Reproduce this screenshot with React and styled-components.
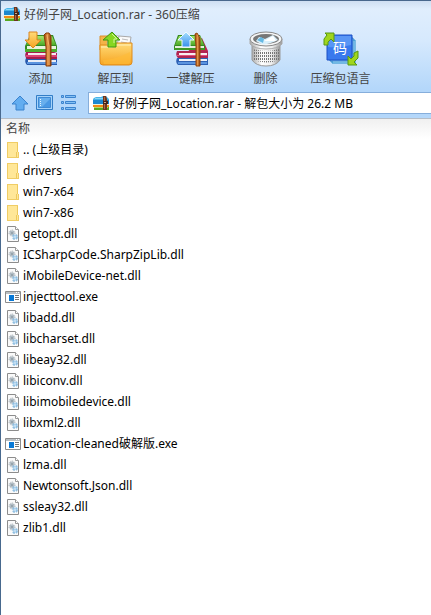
import { useState } from 'react';
import styled, { createGlobalStyle } from 'styled-components';

const GlobalStyle = createGlobalStyle`
  * {
    box-sizing: border-box;
  }

  body {
    margin: 0;
    background: #fff;
    font-family: 'Noto Sans', 'Noto Sans CJK SC', sans-serif;
    font-size: 12px;
  }

  svg {
    display: block;
    flex: none;
  }
`;

const Window = styled.main`
  min-height: 100vh;
  border-left: 1px solid #48698e;
  border-top: 1px solid #49688d;
  background: #fff;
`;

const Head = styled.header`
  padding-bottom: 4px;
  border-bottom: 1px solid #b5bdc7;
  background: linear-gradient(#cfdff2 0, #e0eefd 8px, #d6e9fd 40px, #b4d7fa 88px, #b4d7fa);
`;

const TitleBar = styled.h1`
  display: flex;
  align-items: center;
  gap: 4px;
  height: 26px;
  margin: 0;
  padding-left: 3px;
  color: #444;
  font-size: 12px;
  font-weight: 400;
  white-space: nowrap;
`;

const Toolbar = styled.nav`
  display: flex;
  padding: 4px 0 0 2px;
`;

const ToolButton = styled.button`
  display: flex;
  flex-direction: column;
  align-items: center;
  gap: 2px;
  width: 75px;
  height: 61px;
  padding: 0;
  border: 0;
  background: none;
  color: #444;
  font: inherit;
  line-height: 20px;
  white-space: nowrap;
`;

const AddressRow = styled.div`
  display: flex;
  align-items: center;
  height: 22px;
  padding-left: 10px;
`;

const NavButton = styled.button`
  width: 25px;
  height: 18px;
  padding: 0;
  border: 0;
  background: none;
`;

const AddressBox = styled.label`
  display: flex;
  flex: 1;
  align-items: center;
  gap: 4px;
  height: 22px;
  margin-left: 2px;
  padding-left: 4px;
  border: 1px solid #86aedb;
  border-right: 0;
  background: #fff;
`;

const AddressInput = styled.input`
  flex: 1;
  min-width: 0;
  padding: 0;
  border: 0;
  outline: 0;
  background: none;
  color: #000;
  font: inherit;
`;

const FileTable = styled.table`
  width: 100%;
  border-collapse: collapse;
`;

const HeadCell = styled.th`
  height: 20px;
  padding: 0 5px;
  background: linear-gradient(#f0f0f0, #fff);
  color: #444;
  font-weight: 400;
  line-height: 20px;
  text-align: left;
`;

const FileCell = styled.td`
  height: 21px;
  padding: 0 4px;
  color: #000;
`;

const FileName = styled.div`
  display: flex;
  align-items: center;
  gap: 2px;
  height: 21px;
  line-height: 21px;
  white-space: nowrap;
`;

const ArchiveIcon = () => (
  <svg width="16" height="16" viewBox="0 0 16 16" aria-hidden="true">
    <path d="M1 3l2-1h5l2-1h3l3 3v4H0V4z" fill="#49b4e8" />
    <path d="M2 3h11v1H2z" fill="#8bd6f7" />
    <path d="M0 5h16v4H0z" fill="#1c87cf" />
    <path d="M0 9h16v1H0z" fill="#e9f3dc" />
    <path d="M0 10h16v2H0z" fill="#f18a16" />
    <path d="M1 12h15v3H1z" fill="#58a820" />
    <path d="M1 12h14v1H1z" fill="#b4d968" />
    <path d="M10 1h3l1 3v11h-4z" fill="#6d351d" />
    <path d="M11 2h1v12h-1z" fill="#ad6842" />
    <path d="M10 6h5v3h-5z" fill="#42231a" />
    <path d="M11 7h2v1h-2z" fill="#d7a880" />
  </svg>
);

const Gradients = () => (
  <defs>
    <linearGradient id="gold" x2="0" y2="1">
      <stop stopColor="#ffdb78" />
      <stop offset="1" stopColor="#f7a421" />
    </linearGradient>
    <linearGradient id="green" x2="0" y2="1">
      <stop stopColor="#a4e66c" />
      <stop offset="1" stopColor="#4eaa29" />
    </linearGradient>
    <linearGradient id="strap">
      <stop stopColor="#934008" />
      <stop offset=".5" stopColor="#e49345" />
      <stop offset="1" stopColor="#883c0b" />
    </linearGradient>
    <linearGradient id="sky" x2="0" y2="1">
      <stop stopColor="#a8e0ff" />
      <stop offset="1" stopColor="#388fee" />
    </linearGradient>
  </defs>
);

const BookStack = () => (
  <>
    <path d="M3 27h31v7H4q-3-3-1-7z" fill="#2859ac" />
    <path d="M5 29h28v2H5z" fill="#e9edf7" />
    <path d="M4 31h30v2H4z" fill="#5b94df" />
    <path d="M3 21h28l3 1v6H4q-3-3-1-7z" fill="#a81c4e" />
    <path d="M5 22h28v2H5z" fill="#f6e8ef" />
    <path d="M3 24h31v2H3z" fill="#dc4275" />
    <path d="M7 4h23l4 11v6H2v-6z" fill="#358b22" />
    <path d="M8 5h21l4 9H3z" fill="url(#green)" />
    <path d="M4 15h29v3H4z" fill="#e8f4dc" />
    <path d="M2 18h32v3H2z" fill="#4cad2c" />
  </>
);

const AddIcon = () => (
  <svg width="36" height="36" viewBox="0 0 36 36" aria-hidden="true">
    <Gradients />
    <BookStack />
    <path d="M21 4l2-2h3l2 3v30h-5V16z" fill="url(#strap)" stroke="#8a3c08" />
    <path d="M24 4l2 11v19" fill="none" stroke="#f6b067" />
    <path d="M6 1h8v8h4l-8 8-8-8h4z" fill="url(#gold)" stroke="#dc8520" />
  </svg>
);

const ExtractToIcon = () => (
  <svg width="36" height="36" viewBox="0 0 36 36" aria-hidden="true">
    <path d="M2 5h9l3 4h18v10H2z" fill="#f4b348" stroke="#dd902a" />
    <path d="M12 4l9 1v12H8z" fill="#fff" stroke="#b8b8b8" />
    <path d="M21 5l12 1-2 13H18z" fill="#fafafa" stroke="#a9a9a9" />
    <path d="M24 8l6 1M23 11l6 1" stroke="#bbb" />
    <path d="M2 14h11l3-2h18v19q0 3-3 3H5q-3 0-3-3z" fill="url(#gold)" stroke="#df8b1b" />
    <path d="M3 16h11l3-2h16" fill="none" stroke="#fff0b9" />
    <path d="M5 29q12 0 27-8v10q0 2-3 2H6z" fill="#ffbd38" opacity=".6" />
    <path d="M14 1l8 8h-4v7h-8V9H5z" fill="#87d721" stroke="#3f9512" />
    <path d="M14 3l5 5h-3v4" fill="none" stroke="#d0f39d" />
  </svg>
);

const ExtractIcon = () => (
  <svg width="36" height="36" viewBox="0 0 36 36" aria-hidden="true">
    <path d="M29 7l6 13v7H8z" fill="#bc254e" />
    <path d="M4 27h31v7H5q-3-3-1-7z" fill="#2e61b4" />
    <path d="M6 28h28v2H6z" fill="#eef2f9" />
    <path d="M5 31h29v2H5z" fill="#5b94df" />
    <path d="M4 20h31v7H5q-3-3-1-7z" fill="#b02451" />
    <path d="M6 22h28v2H6z" fill="#f9edf1" />
    <path d="M4 24h30v1H4z" fill="#e0527f" />
    <path d="M5 4h22l5 11v4H1v-4z" fill="#358b22" />
    <path d="M6 5h21l4 9H2z" fill="url(#green)" />
    <path d="M2 15h29v2H2z" fill="#e5efda" />
    <path d="M1 17h31v2H1z" fill="#3f9726" />
    <path d="M22 3l2-1 3 5v28h-4V15z" fill="url(#strap)" stroke="#92420b" />
    <path d="M13 1l8 8h-4v7H9V9H5z" fill="url(#sky)" stroke="#eefaff" />
  </svg>
);

const DeleteIcon = () => (
  <svg width="36" height="36" viewBox="0 0 36 36" aria-hidden="true">
    <defs>
      <linearGradient id="metal">
        <stop stopColor="#aaa" />
        <stop offset=".35" stopColor="#fff" />
        <stop offset=".7" stopColor="#eee" />
        <stop offset="1" stopColor="#999" />
      </linearGradient>
      <pattern id="holes" width="2" height="3" patternUnits="userSpaceOnUse">
        <path d="M0 0h1v2H0z" fill="#777" />
      </pattern>
    </defs>
    <path d="M4 11v18q4 6 14 6t14-6V11z" fill="url(#metal)" stroke="#999" />
    <path d="M5 18q13 4 26 0v11q-13 5-26 0z" fill="url(#holes)" />
    <path d="M2 8v5q5 5 16 5t16-5V8z" fill="url(#metal)" stroke="#aaa" />
    <ellipse cx="18" cy="8" rx="16" ry="7" fill="#f5f5f5" stroke="#888" />
    <ellipse cx="18" cy="8" rx="13" ry="5" fill="#777" />
    <path d="M8 10l3-4 6 2 8-4 5 5q-9 5-17 4z" fill="#d9effa" />
    <path d="M9 9l4-3 3 2-1 4z" fill="#65b9e4" />
    <path d="M16 10l9-5 3 5z" fill="#fff" />
  </svg>
);

const LanguageIcon = () => (
  <svg width="36" height="36" viewBox="0 0 36 36" aria-hidden="true">
    <path d="M9 9h23v23H9z" fill="#bfe9ff" stroke="#228bc9" />
    <path d="M7 7h23v23H7z" fill="#9bd8fb" stroke="#257bc6" />
    <path d="M4 4h25v25H4z" fill="#3979ed" stroke="#1c51c5" />
    <path d="M5 5h23v9q-11 3-23 2z" fill="#5996f5" />
    <text x="17" y="22" fill="#fff" fontSize="14" textAnchor="middle">
      码
    </text>
    <path d="M1 14V8l3-4-2-2h9v9L8 8l-3 3v3z" fill="#a0d51c" stroke="#579812" />
    <path d="M35 20v7l-4 4 3 3h-9v-9l3 3 3-3v-3z" fill="#a0d51c" stroke="#579812" />
  </svg>
);

const UpIcon = () => (
  <svg width="18" height="18" viewBox="0 0 18 18" aria-hidden="true">
    <path d="M9 2l8 8h-4v6H5v-6H1z" fill="#62adf0" stroke="#3b83ce" />
  </svg>
);

const PanelIcon = () => (
  <svg width="18" height="18" viewBox="0 0 18 18" aria-hidden="true">
    <path d="M.5 1.5h16v14H.5z" fill="#a6d3fa" stroke="#337ec7" />
    <path d="M2.5 3.5h12v10h-12z" fill="#68afed" stroke="#3e8ad5" />
    <path d="M4 5h1v1H4zM4 7h1v1H4zM4 9h1v1H4zM4 11h1v1H4z" fill="#e5f5ff" />
    <path d="M6 13l8-8v8z" fill="#4998e4" />
  </svg>
);

const ListIcon = () => (
  <svg width="18" height="18" viewBox="0 0 18 18" aria-hidden="true">
    {[1.5, 7.5, 13.5].map((y) => (
      <g key={y} fill="#83c0f4" stroke="#3b83ce">
        <path d={`M.5 ${y}h2v2h-2z`} />
        <path d={`M4.5 ${y}h10v2h-10z`} />
      </g>
    ))}
  </svg>
);

const FolderIcon = () => (
  <svg width="16" height="16" viewBox="0 0 16 16" aria-hidden="true">
    <path d="M2 0h11v10h1v6H2z" fill="#ffe798" />
    <path d="M2 0h1v16H2zM3 0h10v1H3zM13 10h1v6h-1zM3 15h10v1H3z" fill="#f0cd65" />
    <path d="M12 1h1v9h-1zM11 10h1v5h-1z" fill="#edc95d" />
  </svg>
);

const DllIcon = () => (
  <svg width="16" height="16" viewBox="0 0 16 16" aria-hidden="true">
    <path d="M2.5.5h8l3 3v12h-11z" fill="#fafafa" stroke="#8c8c8c" />
    <path d="M10.5.5v3h3" fill="#fff" stroke="#999" />
    <circle cx="7" cy="7" r="3" fill="none" stroke="#a3adb5" strokeDasharray="1 1" />
    <circle cx="7" cy="7" r="2" fill="#e4eaee" stroke="#98a6b0" />
    <circle cx="10" cy="11" r="2" fill="#cfe6f6" stroke="#8fbfe2" strokeWidth="2" strokeDasharray="2 1" />
    <circle cx="7" cy="7" r="1" fill="#7d8b95" />
  </svg>
);

const ExeIcon = () => (
  <svg width="16" height="16" viewBox="0 0 16 16" aria-hidden="true">
    <path d="M.5 2.5h15v11H.5z" fill="#fff" stroke="#8c8c8c" />
    <path d="M1 3h14v2H1z" fill="#b8bec2" />
    <path d="M11 3h1v1h-1zM13 3h1v1h-1z" fill="#fff" />
    <path d="M4 6h5v6H4z" fill="#0878d5" />
    <path d="M10 6h4v1h-4zM10 8h4v1h-4zM10 10h4v1h-4z" fill="#777" />
  </svg>
);

const tools = [
  { label: '添加', Icon: AddIcon },
  { label: '解压到', Icon: ExtractToIcon },
  { label: '一键解压', Icon: ExtractIcon },
  { label: '删除', Icon: DeleteIcon },
  { label: '压缩包语言', Icon: LanguageIcon },
];

const files = [
  '.. (上级目录)',
  'drivers',
  'win7-x64',
  'win7-x86',
  'getopt.dll',
  'ICSharpCode.SharpZipLib.dll',
  'iMobileDevice-net.dll',
  'injecttool.exe',
  'libadd.dll',
  'libcharset.dll',
  'libeay32.dll',
  'libiconv.dll',
  'libimobiledevice.dll',
  'libxml2.dll',
  'Location-cleaned破解版.exe',
  'lzma.dll',
  'Newtonsoft.Json.dll',
  'ssleay32.dll',
  'zlib1.dll',
];

function FileIcon({ name }) {
  if (name.endsWith('.dll')) return <DllIcon />;
  if (name.endsWith('.exe')) return <ExeIcon />;
  return <FolderIcon />;
}

export default function App() {
  const [address, setAddress] = useState('好例子网_Location.rar - 解包大小为 26.2 MB');

  return (
    <Window>
      <GlobalStyle />
      <Head>
        <TitleBar>
          <ArchiveIcon />
          好例子网_Location.rar - 360压缩
        </TitleBar>
        <Toolbar>
          {tools.map(({ label, Icon }) => (
            <ToolButton key={label} type="button">
              <Icon />
              {label}
            </ToolButton>
          ))}
        </Toolbar>
        <AddressRow>
          <NavButton type="button">
            <UpIcon />
          </NavButton>
          <NavButton type="button">
            <PanelIcon />
          </NavButton>
          <NavButton type="button">
            <ListIcon />
          </NavButton>
          <AddressBox htmlFor="address">
            <ArchiveIcon />
            <AddressInput
              id="address"
              value={address}
              onChange={(e) => setAddress(e.target.value)}
            />
          </AddressBox>
        </AddressRow>
      </Head>
      <FileTable>
        <thead>
          <tr>
            <HeadCell scope="col">名称</HeadCell>
          </tr>
        </thead>
        <tbody>
          {files.map((name) => (
            <tr key={name}>
              <FileCell>
                <FileName>
                  <FileIcon name={name} />
                  {name}
                </FileName>
              </FileCell>
            </tr>
          ))}
        </tbody>
      </FileTable>
    </Window>
  );
}
